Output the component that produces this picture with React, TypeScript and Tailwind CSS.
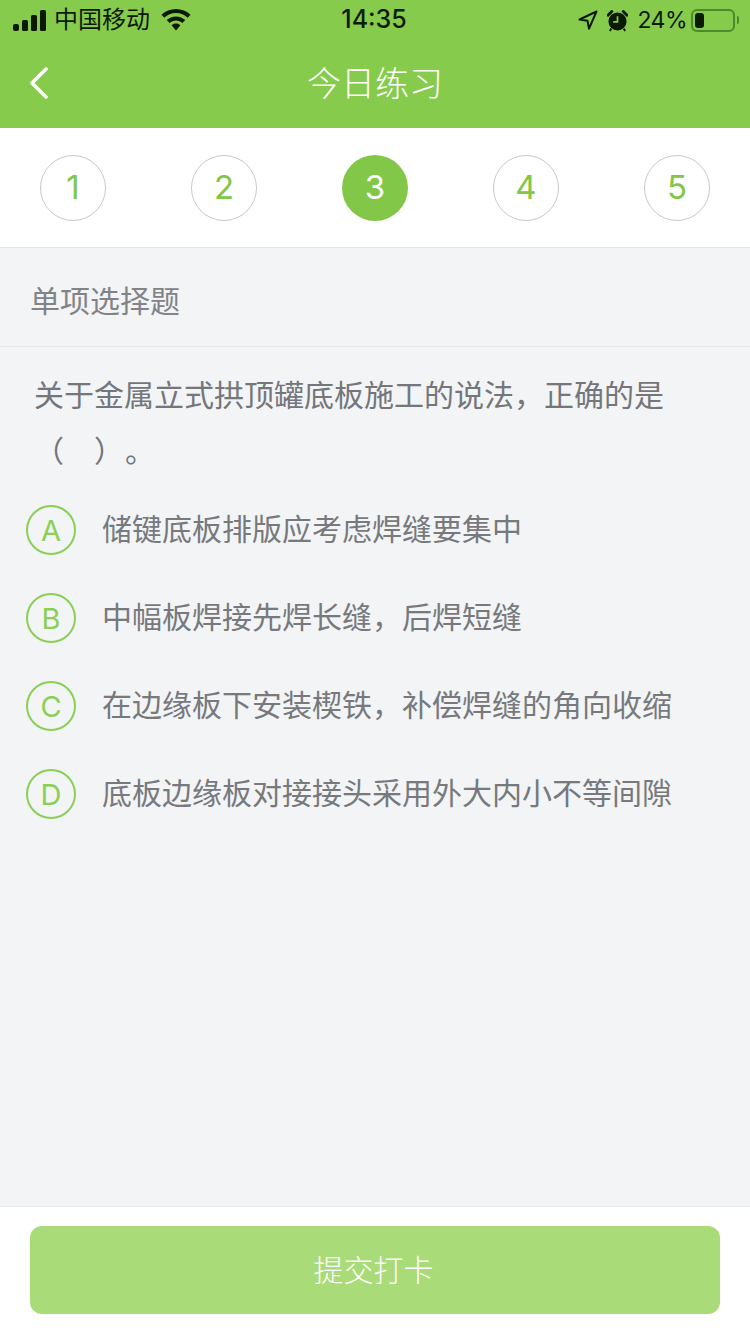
const FONT = "font-['Inter','Noto_Sans_CJK_SC',sans-serif]";

const steps = [1, 2, 3, 4, 5];
const options = [
  { key: "A", text: "储键底板排版应考虑焊缝要集中" },
  { key: "B", text: "中幅板焊接先焊长缝，后焊短缝" },
  { key: "C", text: "在边缘板下安装楔铁，补偿焊缝的角向收缩" },
  { key: "D", text: "底板边缘板对接接头采用外大内小不等间隙" },
];

function StatusBar() {
  return (
    <div className="flex h-10 items-center justify-between pl-[13px] pr-[11px] text-[24px] text-[#0c1a04]">
      <div className="flex w-[220px] items-center">
        {/* signal */}
        <svg width="33" height="21" viewBox="0 0 33 21" fill="#0c1a04">
          <rect x="0" y="14" width="6" height="7" rx="2" />
          <rect x="9" y="10" width="6" height="11" rx="1.5" />
          <rect x="18" y="5" width="6" height="16" rx="1.5" />
          <rect x="27" y="0" width="6" height="21" rx="1.5" />
        </svg>
        <span className="ml-2 leading-none">中国移动</span>
        {/* wifi */}
        <svg className="ml-[11px]" width="30" height="22" viewBox="0 0 30 22" fill="#0c1a04">
          <path d="M15 0C9.4 0 4.3 2.2.5 5.8l2.8 3C6.3 5.9 10.4 4.1 15 4.1s8.7 1.8 11.7 4.7l2.8-3C25.7 2.2 20.6 0 15 0z" />
          <path d="M15 7.4c-3.6 0-6.9 1.4-9.3 3.7l2.9 3c1.7-1.6 3.9-2.6 6.4-2.6s4.7 1 6.4 2.6l2.9-3c-2.4-2.3-5.7-3.7-9.3-3.7z" />
          <path d="M15 14.6c-1.7 0-3.2.6-4.4 1.7L15 21.5l4.4-5.2c-1.2-1.1-2.7-1.7-4.4-1.7z" />
        </svg>
      </div>
      <span className="-ml-[4px] text-[25px] font-medium">14:35</span>
      <div className="flex w-[220px] items-center justify-end">
        {/* location arrow */}
        <svg width="20" height="20" viewBox="0 0 20 20" fill="none" stroke="#0c1a04" strokeWidth="2" strokeLinejoin="round">
          <path d="M18.5 1.5 1.5 9.5l8 1.2 1.5 8z" />
        </svg>
        {/* alarm */}
        <svg className="ml-[9px]" width="21" height="23" viewBox="0 0 22 24">
          <circle cx="11" cy="13" r="9.5" fill="#0c1a04" />
          <path d="M1 6.5 5 2.5 M17 2.5 21 6.5" stroke="#0c1a04" strokeWidth="3" strokeLinecap="round" />
          <path d="M4.5 20.5 3 23 M17.5 20.5 19 23" stroke="#0c1a04" strokeWidth="2" />
          <path d="M11 7.5v6H6.5" fill="none" stroke="#86cc4b" strokeWidth="1.8" />
        </svg>
        <span className="ml-[9px] text-[23px] leading-none tracking-[-0.5px]">24%</span>
        {/* battery */}
        <div className="ml-[4px] flex h-[23px] w-[44px] items-center rounded-[6px] border-2 border-[#4c8a2b] pl-[2px]">
          <div className="h-[15px] w-[9px] rounded-[3px] bg-[#0c1a04]" />
        </div>
        <div className="ml-[2px] h-[8px] w-[2px] rounded-r-sm bg-[#4c8a2b]" />
      </div>
    </div>
  );
}

export default function App() {
  return (
    <div className={`${FONT} flex h-[1334px] w-[750px] flex-col bg-[#f2f4f6]`}>
      {/* Header */}
      <div className="bg-[#87cb4c]">
        <StatusBar />
        <div className="relative flex h-[88px] items-center justify-center">
          <svg className="absolute left-[29px] top-[27px]" width="20" height="32" viewBox="0 0 20 32" fill="none" stroke="#fff" strokeWidth="3.5" strokeLinecap="round" strokeLinejoin="round">
            <path d="M17 2 3 16l14 14" />
          </svg>
          <span className="text-[34px] font-light leading-none text-white">今日练习</span>
        </div>
      </div>

      {/* Steps */}
      <div className="flex h-[120px] items-start justify-between border-b border-[#e6e7e8] bg-white px-10 pt-[27px]">
        {steps.map((n) =>
          n === 3 ? (
            <div key={n} className="flex h-[66px] w-[66px] items-center justify-center rounded-full bg-[#82c748] text-[33px] text-white">
              {n}
            </div>
          ) : (
            <div key={n} className="flex h-[66px] w-[66px] items-center justify-center rounded-full border border-[#c9c9c9] text-[33px] text-[#82c748]">
              {n}
            </div>
          ),
        )}
      </div>

      {/* Question type */}
      <div className="flex h-[99px] shrink-0 items-center border-b border-[#e6e8ea] pl-[30px] pt-[8px] text-[30px] font-normal text-[#818386]">
        单项选择题
      </div>

      {/* Question and options */}
      <div className="flex-1">
        <p className="pl-[34px] pr-[60px] pt-[20px] text-[30px] font-normal leading-[56px] text-[#74767a]">
          关于金属立式拱顶罐底板施工的说法，正确的是
          <br />
          <span>（</span>
          <span className="pl-[30px]">）</span>
          <span className="pl-[16px]">。</span>
        </p>
        <div className="mt-[7px] flex flex-col">
          {options.map((o) => (
            <div key={o.key} className="flex h-[88px] items-center pl-[26px]">
              <div className="flex h-[50px] w-[50px] shrink-0 items-center justify-center rounded-full border-2 border-[#8bcf55] pt-[1px] text-[29px] text-[#8bcf55]">
                {o.key}
              </div>
              <span className="mb-[2px] ml-[26px] text-[30px] font-normal leading-none text-[#77797c]">{o.text}</span>
            </div>
          ))}
        </div>
      </div>

      {/* Footer */}
      <div className="h-[128px] shrink-0 border-t border-[#e8eaec] bg-white px-[30px] pt-[19px]">
        <button className="flex h-[88px] w-full items-center justify-center rounded-xl bg-[#a9db78] pr-[3px] text-[30px] font-light text-white">
          提交打卡
        </button>
      </div>
    </div>
  );
}
